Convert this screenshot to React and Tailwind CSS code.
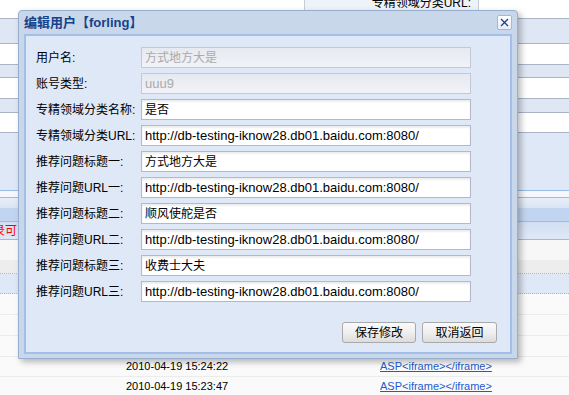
import React from 'react';

const URL = 'http://db-testing-iknow28.db01.baidu.com:8080/';

const fields = [
  { label: '用户名:', value: '方式地方大是', disabled: true },
  { label: '账号类型:', value: 'uuu9', disabled: true, latin: true },
  { label: '专精领域分类名称:', value: '是否' },
  { label: '专精领域分类URL:', value: URL, latin: true },
  { label: '推荐问题标题一:', value: '方式地方大是' },
  { label: '推荐问题URL一:', value: URL, latin: true },
  { label: '推荐问题标题二:', value: '顺风使舵是否' },
  { label: '推荐问题URL二:', value: URL, latin: true },
  { label: '推荐问题标题三:', value: '收费士大夫' },
  { label: '推荐问题URL三:', value: URL, latin: true },
];

const FieldRow = ({ label, value, disabled, latin }) => (
  <div className="flex items-center h-[21px]">
    <label className="w-[105px] text-[12px] text-black leading-none">{label}</label>
    <div
      className={`w-[330px] h-[21px] flex items-center px-[3px] border leading-none ${
        disabled
          ? 'border-[#c3c8d4] bg-gradient-to-b from-[#e6e9ef] to-[#f1f3f8] text-[#aaaaaa]'
          : 'border-[#b5b8c8] bg-white shadow-[inset_0_2px_2px_rgba(0,0,0,0.07)] text-black'
      } ${latin ? 'text-[13px]' : 'text-[12px]'}`}
    >
      {value}
    </div>
  </div>
);

const Button = ({ children, w }) => (
  <button
    className={`${w} h-[21px] rounded-[3px] border border-[#a9a9a9] bg-gradient-to-b from-[#fafafa] via-[#efefef] to-[#dcdcdc] text-[12px] text-black leading-none`}
  >
    {children}
  </button>
);

const DataRow = ({ date }) => (
  <div className="h-[20px] flex items-center bg-[#fafafa] border-b border-[#ececec] text-[11px]">
    <span className="w-[126px]" />
    <span className="w-[254px] text-black">{date}</span>
    <a href="#" className="text-[#1e5bd0] underline">ASP&lt;iframe&gt;&lt;/iframe&gt;</a>
  </div>
);

export default function App() {
  return (
    <div className="relative w-[569px] h-[395px] overflow-hidden bg-white font-['Liberation_Sans','Noto_Sans_CJK_SC',sans-serif]">
      {/* background page */}
      <div className="flex flex-col">
        <div className="h-[19px] flex border-b border-[#a9b4c6]">
          <div className="w-[304px]" />
          <div className="w-[175px] bg-[#eef2f9] border-x border-[#c6cdd9] flex justify-end pr-[7px] overflow-hidden">
            <span className="text-[12px] leading-[12px] -mt-[3px]">专精领域分类URL:</span>
          </div>
        </div>
        <div className="h-[25px] bg-[#dfe7f5] border-b border-[#a9b4c6]" />
        <div className="h-[21px] bg-white border-b border-[#a9b4c6]" />
        <div className="h-[13px] bg-[#dfe7f5] border-b border-[#a9b4c6]" />
        <div className="h-[21px] bg-white border-b border-[#a9b4c6]" />
        <div className="h-[14px] bg-[#dfe7f5] border-b border-[#a9b4c6]" />
        <div className="h-[20px] bg-white border-b border-[#a9b4c6]" />
        <div className="h-[58px] bg-[#dfe8f6] border-b border-[#99bbe8]" />
        <div className="h-[7px] bg-[#f4f7fc] border-b border-[#99bbe8]" />
        <div className="h-[10px] bg-gradient-to-b from-[#e9eff9] to-[#d9e4f4]" />
        <div className="h-[14px] bg-[#c2d5f0] border-b border-[#99bbe8]" />
        <div className="h-[18px] bg-gradient-to-b from-[#d2dff2] to-[#dfe8f6] border-b border-[#99bbe8] flex items-center overflow-hidden">
          <span className="-ml-[7px] text-[12px] text-[#ff0000] leading-none">录可以</span>
        </div>
        <div className="h-[20px] bg-[#f7f7f7]" />
        <div className="h-[14px] bg-[#ededed] border-b border-dotted border-[#99bbe8]" />
        <div className="h-[20px] bg-[#dfe8f6] border-b border-dotted border-[#99bbe8]" />
        <div className="h-[21px] bg-[#fafafa] border-b border-[#ececec]" />
        <div className="h-[21px] bg-[#fafafa] border-b border-[#ececec]" />
        <div className="h-[21px] bg-[#fafafa] border-b border-[#ececec]" />
        <DataRow date="2010-04-19 15:24:22" />
        <DataRow date="2010-04-19 15:23:47" />
      </div>

      {/* dialog */}
      <div className="absolute left-[18px] top-[10px] w-[500px] h-[349px] flex flex-col border border-[#98aece] rounded-t-[4px] bg-[#c9d7ea] shadow-[3px_3px_6px_rgba(0,0,0,0.28)] px-[5px] pb-[4px]">
        <div className="h-[23px] flex items-center justify-between">
          <span className="text-[13px] font-bold text-[#15428b] leading-none">编辑用户【forling】</span>
          <div className="w-[15px] h-[15px] rounded-[2px] border border-[#99bbe8] bg-gradient-to-b from-white to-[#e8eef8] flex items-center justify-center">
            <svg width="9" height="9" viewBox="0 0 9 9">
              <path d="M1 1 L8 8 M8 1 L1 8" stroke="#1d3f86" strokeWidth="1.3" fill="none" />
            </svg>
          </div>
        </div>
        <div className="flex-1 border-2 border-[#a3bfe8] bg-[#dfe8f6] pt-[11px] pl-[10px] pr-[13px] flex flex-col">
          <div className="flex flex-col gap-[5px]">
            {fields.map((f) => (
              <FieldRow key={f.label} {...f} />
            ))}
          </div>
          <div className="mt-[20px] flex justify-end gap-[6px]">
            <Button w="w-[74px]">保存修改</Button>
            <Button w="w-[75px]">取消返回</Button>
          </div>
        </div>
      </div>
    </div>
  );
}
